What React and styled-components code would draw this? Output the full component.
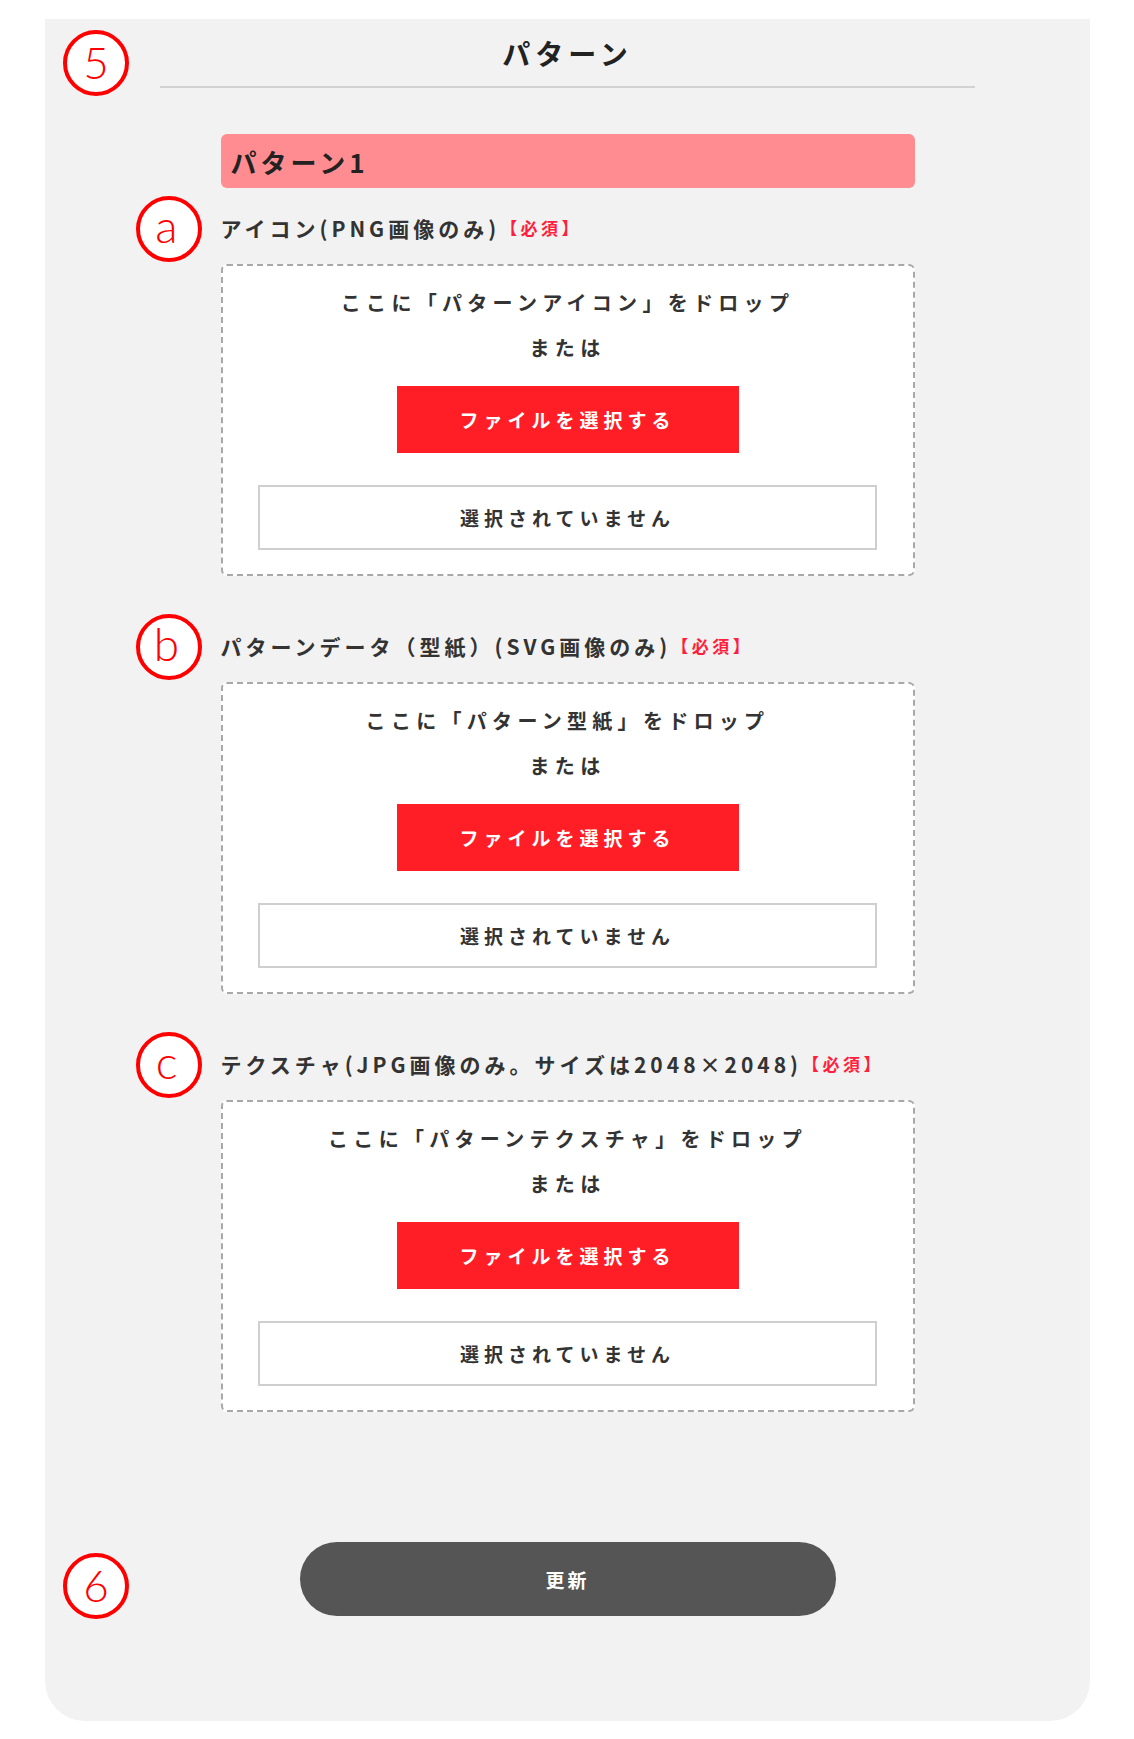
import React from 'react';
import styled, {createGlobalStyle} from 'styled-components';

const GlobalStyle = createGlobalStyle`
  body {
    margin: 0;
    background: #ffffff;
    font-family: "Noto Sans CJK JP", "Noto Sans", sans-serif;
    color: #222;
  }
`

const fields = [
    {mark: 'a', label: 'アイコン(PNG画像のみ)', target: 'パターンアイコン'},
    {mark: 'b', label: 'パターンデータ（型紙）(SVG画像のみ)', target: 'パターン型紙'},
    {mark: 'c', label: 'テクスチャ(JPG画像のみ。サイズは2048×2048)', target: 'パターンテクスチャ'},
];

const App = () => {
    return (
        <Page>
            <GlobalStyle/>
            <Panel>
                <Marker $top={11} $left={18}>5</Marker>
                <Heading>パターン</Heading>
                <Column>
                    <PatternBar>パターン1</PatternBar>
                    {fields.map((f) => (
                        <Field key={f.mark}>
                            <LabelRow>
                                <Marker $top={-17} $left={-85} $small>{f.mark}</Marker>
                                {f.label}
                                <Required>【必須】</Required>
                            </LabelRow>
                            <DropZone>
                                <DropText>ここに「{f.target}」をドロップ</DropText>
                                <OrText>または</OrText>
                                <SelectButton>ファイルを選択する</SelectButton>
                                <FileName>選択されていません</FileName>
                            </DropZone>
                        </Field>
                    ))}
                </Column>
                <Footer>
                    <Marker $top={11} $left={18}>6</Marker>
                    <UpdateButton>更新</UpdateButton>
                </Footer>
            </Panel>
        </Page>
    );
};

const Page = styled.div`
  padding: 19px 44px 19px 45px;
`

const Panel = styled.div`
  position: relative;
  width: 1045px;
  background: #f2f2f2;
  border-radius: 0 0 40px 40px;
  padding: 14px 0 105px;
  box-sizing: border-box;
  display: flex;
  flex-direction: column;
  align-items: center;
`

const Marker = styled.div`
  position: absolute;
  top: ${p => p.$top}px;
  left: ${p => p.$left}px;
  width: 58px;
  border: 4px solid #ff0000;
  border-radius: 50%;
  background: #ffffff;
  color: #ff0000;
  display: flex;
  align-items: center;
  justify-content: center;
  font-family: Lato, "Liberation Sans", sans-serif;
  font-size: ${p => p.$small ? 46 : 44}px;
  font-weight: 300;
  line-height: 1;
  padding-bottom: ${p => p.$small ? 6 : 2}px;
  box-sizing: content-box;
  height: ${p => p.$small ? 52 : 56}px;
`

const Heading = styled.h2`
  margin: 0;
  width: 815px;
  text-align: center;
  font-size: 28px;
  font-weight: 700;
  letter-spacing: 5px;
  line-height: 40px;
  padding-bottom: 13px;
  border-bottom: 2px solid #d2d2d2;
`

const Column = styled.div`
  width: 694px;
  margin-top: 46px;
  display: flex;
  flex-direction: column;
`

const PatternBar = styled.div`
  height: 54px;
  background: #ff8c90;
  border-radius: 6px;
  padding-left: 10px;
  display: flex;
  align-items: center;
  font-size: 26px;
  font-weight: 700;
  letter-spacing: 4px;
`

const Field = styled.div`
  margin-top: 25px;
  & + & {
    margin-top: 55px;
  }
`

const LabelRow = styled.div`
  position: relative;
  line-height: 30px;
  font-size: 21px;
  font-weight: 700;
  letter-spacing: 4px;
  color: #333;
  display: flex;
  align-items: center;
`

const Required = styled.span`
  color: #ff1e3c;
  font-size: 17px;
  letter-spacing: 3.5px;
`

const DropZone = styled.div`
  margin-top: 21px;
  height: 312px;
  box-sizing: border-box;
  background: #ffffff;
  border: 2px dashed #a8a8a8;
  border-radius: 6px;
  padding-top: 22px;
  display: flex;
  flex-direction: column;
  align-items: center;
`

const DropText = styled.div`
  line-height: 30px;
  font-size: 20px;
  font-weight: 700;
  letter-spacing: 5.3px;
  color: #333;
`

const OrText = styled(DropText)`
  margin-top: 15px;
`

const SelectButton = styled.div`
  margin-top: 23px;
  width: 342px;
  height: 67px;
  background: #ff1e26;
  color: #ffffff;
  display: flex;
  align-items: center;
  justify-content: center;
  font-size: 19px;
  font-weight: 700;
  letter-spacing: 5px;
`

const FileName = styled.div`
  margin-top: 32px;
  width: 619px;
  height: 65px;
  box-sizing: border-box;
  border: 2px solid #cfcfcf;
  display: flex;
  align-items: center;
  justify-content: center;
  font-size: 19px;
  font-weight: 700;
  letter-spacing: 5px;
  color: #333;
`

const Footer = styled.div`
  position: relative;
  align-self: stretch;
  margin-top: 130px;
  display: flex;
  justify-content: center;
`

const UpdateButton = styled.div`
  width: 536px;
  height: 74px;
  border-radius: 37px;
  background: #555555;
  color: #ffffff;
  display: flex;
  align-items: center;
  justify-content: center;
  font-size: 19px;
  font-weight: 700;
  letter-spacing: 3px;
`

export default App;
